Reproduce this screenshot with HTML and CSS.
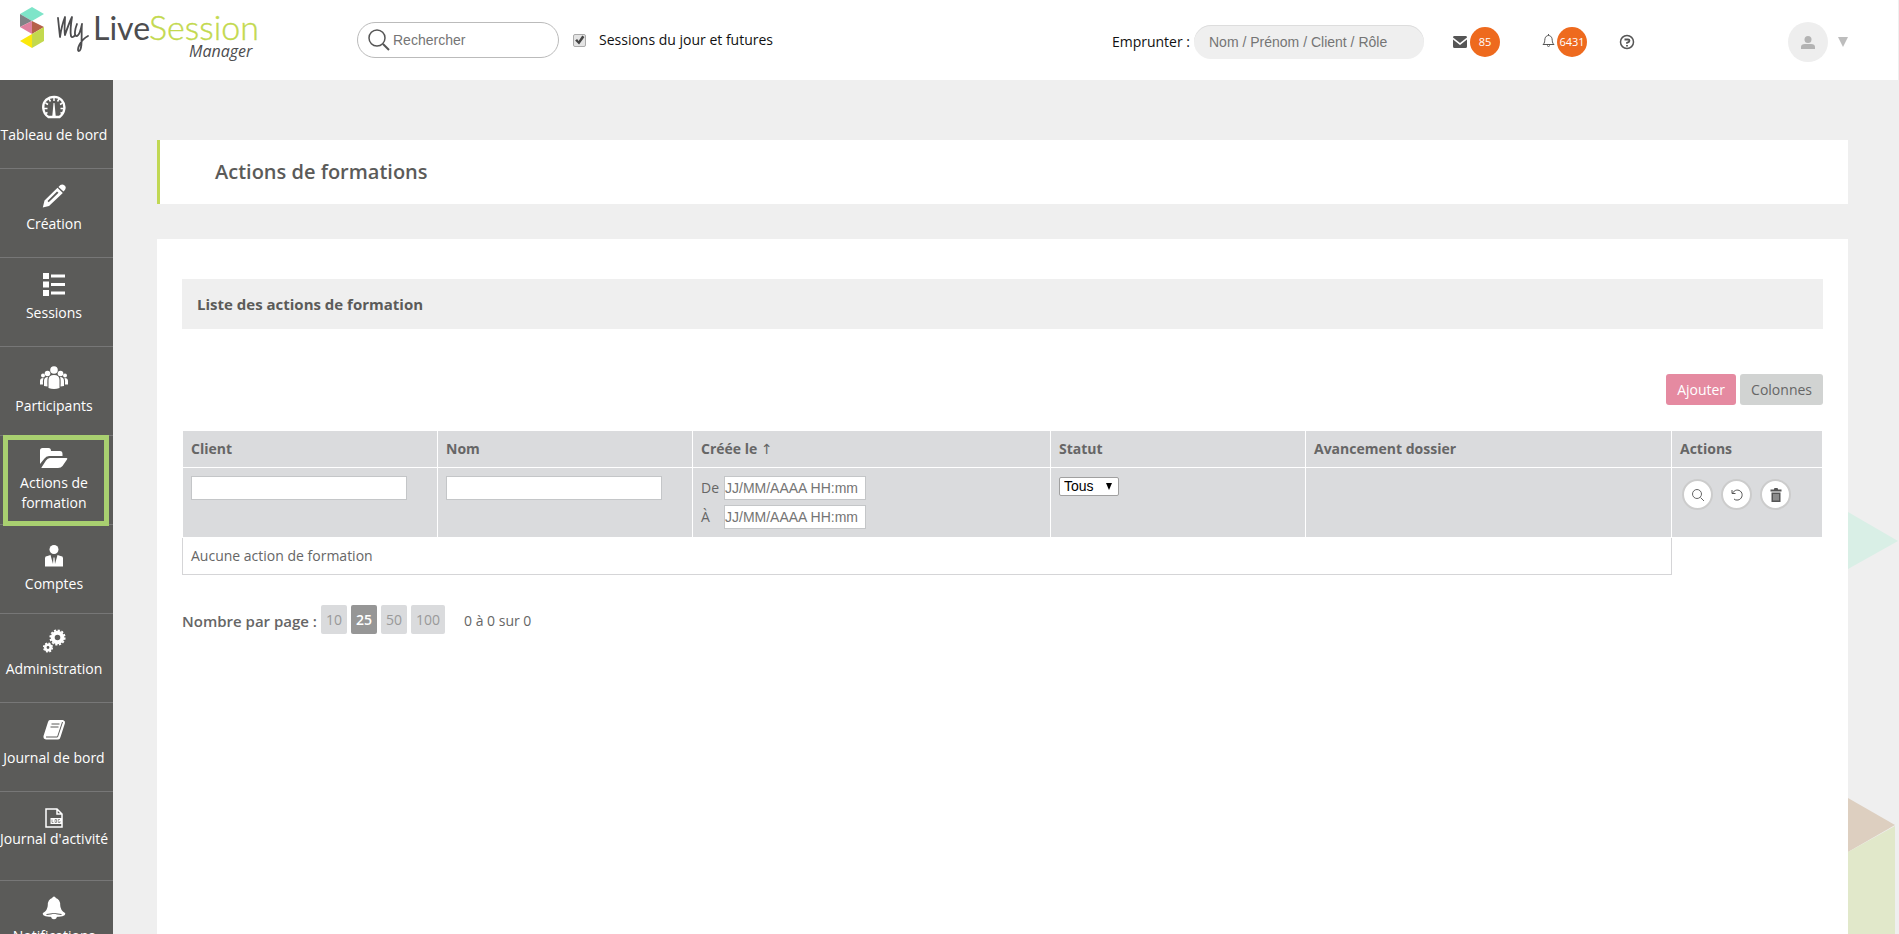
FILE: index.html
```html
<!DOCTYPE html>
<html lang="fr">
<head>
<meta charset="utf-8">
<title>My LiveSession Manager</title>
<link rel="stylesheet" href="styles.css">
</head>
<body>
<header class="topbar">
  <a class="logo" href="#" aria-label="My LiveSession Manager">
    <svg width="270" height="70" viewBox="0 0 270 70">
      <path fill="#7ee5c9" d="M20 14 32 7l12 7-12 7z"/>
      <path fill="#808285" d="M20 14v13l12-6z"/>
      <path fill="#e0809f" d="M20 27l12-6v13z"/>
      <path fill="#b5614a" d="M32 21l12 6-12 7z"/>
      <path fill="#c3d94e" d="M44 27v14l-12 7V34z"/>
      <path fill="#fbe80c" d="M32 34v14l-12-7z"/>
      <path fill="none" stroke="#4d4d4f" stroke-width="1.8" stroke-linecap="round" stroke-linejoin="round" d="M58 18l2 19c1-7 3-15 5-20 0 6-1 12 0 18 2-6 4-12 7-18-1 6-2 14-1 19 1 2 3 1 4-1M77 24c-2 5-3 11-1 12 3 1 5-7 6-12-1 8 1 26-3 27-3 0 1-11 9-15"/>
      <text class="logo-live" x="93" y="40">Live</text>
      <text class="logo-session" x="149" y="40">Session</text>
      <text class="logo-manager" x="189" y="57">Manager</text>
    </svg>
  </a>
  <form class="search">
    <label class="search-box">
      <svg width="22" height="22" viewBox="0 0 22 22" fill="none" stroke="#555" stroke-width="1.5"><circle cx="9" cy="9" r="8"/><path stroke-width="2" d="M15 15l6 6"/></svg>
      <input type="search" placeholder="Rechercher" aria-label="Rechercher">
    </label>
    <input class="tick" type="checkbox" id="future" checked>
    <label for="future">Sessions du jour et futures</label>
  </form>
  <div class="tools">
    <label class="borrow" for="borrow">Emprunter :</label>
    <input class="borrow-input" id="borrow" type="text" placeholder="Nom / Prénom / Client / Rôle">
    <a class="notice" href="#" aria-label="Messages">
      <svg width="14" height="12" viewBox="0 0 14 12" fill="#555"><path d="M1 0h12q1 0 1 1.500L7 7 0 1.500Q0 0 1 0z"/><path d="M0 3.500 7 9l7-5.500V10.500Q14 12 12.500 12h-11Q0 12 0 10.500z"/></svg>
      <span class="badge">85</span>
    </a>
    <a class="notice notice-bell" href="#" aria-label="Alertes">
      <svg class="bell" width="13" height="14" viewBox="0 0 13 14" fill="none" stroke="#555"><path d="M1 10.500C3 9 2.500 7 3 4.500 3.500 2.500 5 1.500 6.500 1.500S9.500 2.500 10 4.500c.5 2.500 0 4.500 2 6zM5 11.500q1.500 2 3 0M6.500 0v1.500"/></svg>
      <span class="badge">6431</span>
    </a>
    <a class="help" href="#" aria-label="Aide">
      <svg width="16" height="16" viewBox="0 0 16 16" fill="none" stroke="#555" stroke-width="1.500"><circle cx="8" cy="8" r="6.500"/><path stroke-width="1.800" d="M5.500 5.500h3.500q1.500 0 1.500 1.200T8 8.800v1M8 11v1.500"/></svg>
    </a>
    <button class="account" type="button" aria-label="Mon compte">
      <span class="avatar"><svg width="14" height="13" viewBox="0 0 14 13" fill="#b3b3b3"><circle cx="7" cy="3.500" r="3.500"/><path d="M0 13v-2q0-3 4-3h6q4 0 4 3v2z"/></svg></span>
      <svg width="10" height="10" viewBox="0 0 10 10"><path fill="#bdbdbd" d="M0 0h10L5 10z"/></svg>
    </button>
  </div>
</header>
<div class="shell">
  <nav class="sidebar">
    <a class="item" href="#">
      <svg class="icon" viewBox="0 0 24 24" fill="none" stroke="#fff"><path stroke-width="2.400" d="M6.500 22C0 18 0 9 4 5 9 .5 16 1 19.800 5.200 24 10 23 18 17.500 22z"/><path stroke-width="1.500" d="M12 2v4M7 4l1.500 2.500M17 4l-1.500 2.500M3.500 8l2.500 1.500M20.500 8L18 9.500M2 13.500h3.500M22 13.500h-3.500M3.500 18.500l2-1M20.500 18.500l-2-1"/><path fill="#fff" stroke="none" d="M11.500 8h1l1.300 14h-3.600z"/></svg>
      <span>Tableau de bord</span></a>
    <a class="item" href="#">
      <svg class="icon" viewBox="0 0 24 24" fill="#fff"><path d="M16.500 3Q19.500-1 22.500 1.500T21.500 7.500z"/><path fill-rule="evenodd" d="M15.500 3.800 20.800 9 7 22 .8 23.500 2.500 16.500zM15 7.500 5.500 17l1.200 1.200L16.500 8.800z"/></svg>
      <span>Création</span></a>
    <a class="item" href="#">
      <svg class="icon" viewBox="0 0 24 24" fill="#fff"><path d="M1 0h6v6H1zM1 8.500h6v6H1zM1 17h6v6H1zM9 1.500h14v3H9zM9 10h14v3H9zM9 18.500h14v3H9z"/></svg>
      <span>Sessions</span></a>
    <a class="item item-low" href="#">
      <svg class="icon icon-wide" viewBox="0 0 28 24" fill="#fff"><circle cx="14" cy="4" r="3.800"/><circle cx="7.500" cy="7.500" r="2.800"/><circle cx="20.500" cy="7.500" r="2.800"/><circle cx="3" cy="9.500" r="2"/><circle cx="25" cy="9.500" r="2"/><path d="M8.500 22V14q0-5 5.500-5t5.500 5v8q-5.500 2-11 0zM4 20v-5q0-4 4-4-1 2-.5 9.500zM24 20v-5q0-4-4-4 1 2 .5 9.500zM0 18.500V15q0-3 3.500-3-.8 2-.5 6.500zM28 18.500V15q0-3-3.500-3 .8 2 .5 6.500z"/></svg>
      <span>Participants</span></a>
    <a class="item item-active" href="#" aria-current="page">
      <svg class="icon icon-wide" viewBox="0 0 28 24" fill="#fff"><path d="M0 18V4.500Q0 2 2.500 2h6Q11 2 11 5h9q2.500 0 2.500 3v2H9Q6 10 4.500 12.500z"/><path d="M1.500 21.500 6 14.500Q7.500 12 10 12h16.500Q28 12 27 13.500L22.500 20Q21 22 18 22H2q-1 0-.5-.5z"/></svg>
      <span>Actions de formation</span></a>
    <a class="item item-low" href="#">
      <svg class="icon" viewBox="0 0 24 24" fill="#fff"><circle cx="12" cy="5.500" r="4.500"/><path d="M3 22.500V14q0-2 2.500-2l3-1 2.500 9 .5-6.500h1l.5 6.500 2.500-9 3 1q2.500 0 2.500 2v8.500z"/></svg>
      <span>Comptes</span></a>
    <a class="item" href="#">
      <svg class="icon" viewBox="0 0 24 24" fill="none" stroke="#fff"><circle cx="15.500" cy="8.500" r="4.800" stroke-width="4"/><circle cx="15.500" cy="8.500" r="7.200" stroke-width="1.800" stroke-dasharray="2.200 1.570"/><circle cx="6" cy="18.500" r="2.700" stroke-width="2.600"/><circle cx="6" cy="18.500" r="4.300" stroke-width="1.600" stroke-dasharray="1.900 1.477"/></svg>
      <span>Administration</span></a>
    <a class="item" href="#">
      <svg class="icon" viewBox="0 0 24 24"><path fill="#fff" d="M8 2h13q2.500 1 2 3L18.500 19q-.5 2.500-2.500 2.500H4q-3-.5-2.500-3.500L6 4q.5-2 2-2z"/><path fill="none" stroke="#5b5b59" d="M9.500 6h8M8.500 9h8M4 19h11.500L20.500 4"/></svg>
      <span>Journal de bord</span></a>
    <a class="item item-tight" href="#">
      <svg class="icon" viewBox="0 0 24 24" fill="none" stroke="#fff" stroke-width="1.500"><path d="M4 4h11l5 5v13H4zM15 4v5h5"/><path fill="#fff" stroke="none" d="M8.500 13H20v6H8.500z"/><path stroke="#5b5b59" stroke-width=".6" d="M10 14.500v3h1.500M13 14.500h1.500v3H13zM18 14.500h-1.800v3H18V16"/></svg>
      <span>Journal d'activité</span></a>
    <a class="item" href="#">
      <svg class="icon" viewBox="0 0 24 24" fill="#fff"><path d="M12 .5q1.500 0 1.800 1.500 4.400 1.500 4.400 7 0 5 4.800 8Q25 21 12 21T1 17Q5.800 14 5.800 9q0-5.500 4.400-7Q10.500.5 12 .5z"/><path fill="none" stroke="#5b5b59" d="M4.500 18.500q7.500-2 15 0"/><circle cx="12" cy="20.500" r="2.800"/></svg>
      <span>Notifications</span></a>
  </nav>
  <main class="content">
    <svg class="backdrop" width="50" height="934" viewBox="0 0 50 934"><path fill="#d9efe6" d="M0 512l50 29-50 28z"/><path fill="#ddcfc0" d="M0 798l47 27-47 27z"/><path fill="#e1e8ca" d="M47 826v108H0v-82z"/></svg>
    <h1 class="page-title">Actions de formations</h1>
    <section class="panel">
      <h2 class="panel-title">Liste des actions de formation</h2>
      <div class="actions">
        <button class="btn btn-pink" type="button">Ajouter</button>
        <button class="btn" type="button">Colonnes</button>
      </div>
      <table class="grid">
        <colgroup><col class="c-mid"><col class="c-mid"><col class="c-date"><col class="c-mid"><col class="c-wide"><col></colgroup>
        <thead>
          <tr><th>Client</th><th>Nom</th><th>Créée le <span class="sort">↑</span></th><th>Statut</th><th>Avancement dossier</th><th>Actions</th></tr>
          <tr class="filters">
            <td><input class="field" type="text" aria-label="Client"></td>
            <td><input class="field" type="text" aria-label="Nom"></td>
            <td>
              <div class="dates">
                <label for="from">De</label><input class="date" id="from" type="text" placeholder="JJ/MM/AAAA HH:mm">
                <label for="to">À</label><input class="date" id="to" type="text" placeholder="JJ/MM/AAAA HH:mm">
              </div>
            </td>
            <td><span class="select"><select aria-label="Statut"><option>Tous</option></select></span></td>
            <td></td>
            <td>
              <div class="rounds">
                <button class="round" type="button" aria-label="Filtrer"><svg width="14" height="14" viewBox="0 0 14 14" fill="none" stroke="#666"><circle cx="6" cy="6" r="4.500"/><path d="M9.500 9.500 13 13"/></svg></button>
                <button class="round" type="button" aria-label="Réinitialiser"><svg width="14" height="14" viewBox="0 0 14 14" fill="none" stroke="#555"><path d="M2 2v3.500h3.500M2.500 5.500C4 1.500 9 1 11.200 4S11.500 11.500 8 12q-2.500.5-4-1"/></svg></button>
                <button class="round" type="button" aria-label="Supprimer"><svg width="12" height="14" viewBox="0 0 12 14"><path fill="#555" d="M4 1q0-1 1-1h2q1 0 1 1v.5h3.500v2H.5v-2H4zM1.500 4.500h9V14h-9z"/><path stroke="#ddd" stroke-width=".8" d="M4 6v6.500M6 6v6.500M8 6v6.500"/></svg></button>
              </div>
            </td>
          </tr>
        </thead>
        <tbody><tr><td class="empty" colspan="5">Aucune action de formation</td></tr></tbody>
      </table>
      <div class="pager">
        <strong>Nombre par page :</strong>
        <div class="sizes">
          <button class="size" type="button">10</button>
          <button class="size size-on" type="button">25</button>
          <button class="size" type="button">50</button>
          <button class="size" type="button">100</button>
        </div>
        <span>0 à 0 sur 0</span>
      </div>
    </section>
  </main>
</div>
</body>
</html>
```
FILE: styles.css
```css
* { box-sizing: border-box; }

body {
  margin: 0;
  height: 100vh;
  display: flex;
  flex-direction: column;
  overflow: hidden;
  background: #efefef;
  color: #666;
  font: 14px/20px "Open Sans", "Noto Sans", sans-serif;
}

a { color: inherit; text-decoration: none; }
svg { display: block; flex: none; }
button, input, select { margin: 0; font-size: 14px; }
button { font-family: inherit; cursor: pointer; }
input, select { font-family: "Liberation Sans", Arial, sans-serif; }
input::placeholder { color: #757575; opacity: 1; }

.topbar {
  flex: none;
  display: flex;
  align-items: center;
  height: 80px;
  margin-right: 1px;
  padding-right: 50px;
  background: #fff;
  color: #111;
}

.logo { flex: none; align-self: flex-start; width: 357px; }
.logo-live { font: 32px Lato, sans-serif; fill: #4d4d4f; }
.logo-session { font: 300 34px Lato, sans-serif; fill: #c3d94e; stroke: #c3d94e; stroke-width: .4px; }
.logo-manager { font: italic 16px "Open Sans", sans-serif; fill: #4d4d4f; }

.search { display: flex; align-items: center; }
.search-box {
  display: flex;
  align-items: center;
  gap: 3px;
  width: 202px;
  height: 36px;
  padding: 0 10px;
  border: 1px solid #bbb;
  border-radius: 18px;
}
.search-box input { width: 140px; border: 0; padding: 0; outline: 0; background: none; }
.tick { appearance: none; width: 13px; height: 13px; margin: 0 13px 0 14px; border: 1px solid #aaa; border-radius: 2px; background: #e4e4e4; }
.tick:checked::before {
  content: "";
  display: block;
  height: 11px;
  background: #444;
  clip-path: polygon(10% 55%, 28% 40%, 42% 58%, 75% 8%, 95% 22%, 46% 92%);
}

.tools { display: flex; align-items: center; margin-left: auto; padding-top: 4px; }
.borrow-input {
  width: 230px;
  height: 34px;
  margin-left: 4px;
  padding: 0 15px 1px;
  border: 0;
  border-radius: 17px;
  background: #efefef;
  box-shadow: inset 0 1px #ddd;
}
.notice { display: flex; align-items: center; gap: 3px; margin-left: 29px; }
.notice-bell { margin-left: 42px; gap: 2px; }
.bell { margin-bottom: 2px; }
.badge {
  width: 30px;
  height: 30px;
  border-radius: 50%;
  background: #ee6a1e;
  color: #fff;
  font-size: 11px;
  line-height: 30px;
  text-align: center;
}
.help { margin-left: 32px; }
.account { display: flex; align-items: center; gap: 10px; margin-left: 153px; padding: 0; border: 0; background: none; }
.avatar { display: grid; place-items: center; width: 40px; height: 40px; border-radius: 50%; background: #eee; }

.shell { flex: 1; display: flex; min-height: 0; }

.sidebar { flex: none; width: 113px; overflow: hidden; background: #5b5b59; color: #fff; }
.item {
  position: relative;
  display: flex;
  flex-direction: column;
  align-items: center;
  gap: 6px;
  height: 89px;
  padding: 15px 5px 0 0;
  border-bottom: 1px solid #777;
  text-align: center;
  white-space: nowrap;
}
.icon { width: 24px; height: 24px; }
.icon-wide { width: 28px; }
.item-low { padding-top: 19px; }
.item-tight { gap: 0; padding-top: 13px; }
.item-active { gap: 3px; padding: 10px 15px 0 10px; white-space: normal; }
.item-active::after { content: ""; position: absolute; inset: -1px 4px -2px 3px; border: 5px solid #a9d070; z-index: 1; }

.content {
  position: relative;
  flex: 1;
  display: flex;
  flex-direction: column;
  min-width: 0;
  padding: 60px 51px 0 44px;
}
.backdrop { position: absolute; right: 1px; top: -80px; }
.page-title {
  flex: none;
  margin: 0 0 35px;
  padding: 17px 55px;
  border-left: 3px solid #c1d854;
  background: #fff;
  color: #5b5b59;
  font-size: 20px;
  font-weight: 600;
  line-height: 30px;
}
.panel { flex: 1; padding: 40px 25px 0; background: #fff; }
.panel-title { margin: 0; padding: 15px; background: #efefef; color: #5b5b59; font-size: 15px; line-height: 20px; }

.actions { display: flex; justify-content: flex-end; gap: 4px; margin: 45px 0 25px; }
.btn { height: 31px; padding: 0 11px; border: 0; border-radius: 3px; background: #d1d3d2; color: #666; }
.btn-pink { background: #e58aa1; color: #fff; }

.grid { width: 100%; table-layout: fixed; border-collapse: collapse; }
.c-mid { width: 255px; }
.c-date { width: 358px; }
.c-wide { width: 366px; }
.grid th, .grid td { padding: 8px; border: 1px solid #fff; background: #dadbdd; text-align: left; vertical-align: top; }
.grid th { color: #666; }
.filters td { height: 70px; }
.grid .empty { border: 1px solid #d5d5d7; background: #fff; }
.sort { font: 14px/16px "DejaVu Sans", sans-serif; }
.field { display: block; width: 216px; height: 24px; border: 1px solid #c4c6c8; }
.dates { display: grid; grid-template-columns: 23px 142px; row-gap: 5px; align-items: center; }
.date { height: 24px; padding: 0; border: 1px solid #c4c6c8; }
.select { position: relative; display: inline-block; }
.select::after { content: ""; position: absolute; right: 7px; top: 6px; border: solid transparent; border-width: 7px 3px 0; border-top-color: #000; pointer-events: none; }
select { display: block; appearance: none; width: 60px; height: 19px; padding: 0 4px; border: 1px solid #a0a0a0; border-radius: 2px; background: #fff; color: #000; }
.rounds { display: flex; gap: 8px; padding: 3px 2px; }
.round { display: grid; place-items: center; width: 31px; height: 31px; padding: 0; border: 2px solid #ccc; border-radius: 50%; background: #fff; }

.pager { display: flex; align-items: center; margin-top: 30px; }
.pager strong { font-size: 15px; font-weight: 600; }
.sizes { display: flex; gap: 4px; margin: 0 19px 2px 4px; }
.size { height: 29px; padding: 0 5px; border: 0; border-radius: 2px; background: #dadbdd; color: #999; }
.size-on { background: #969696; color: #fff; font-weight: 600; }
```
